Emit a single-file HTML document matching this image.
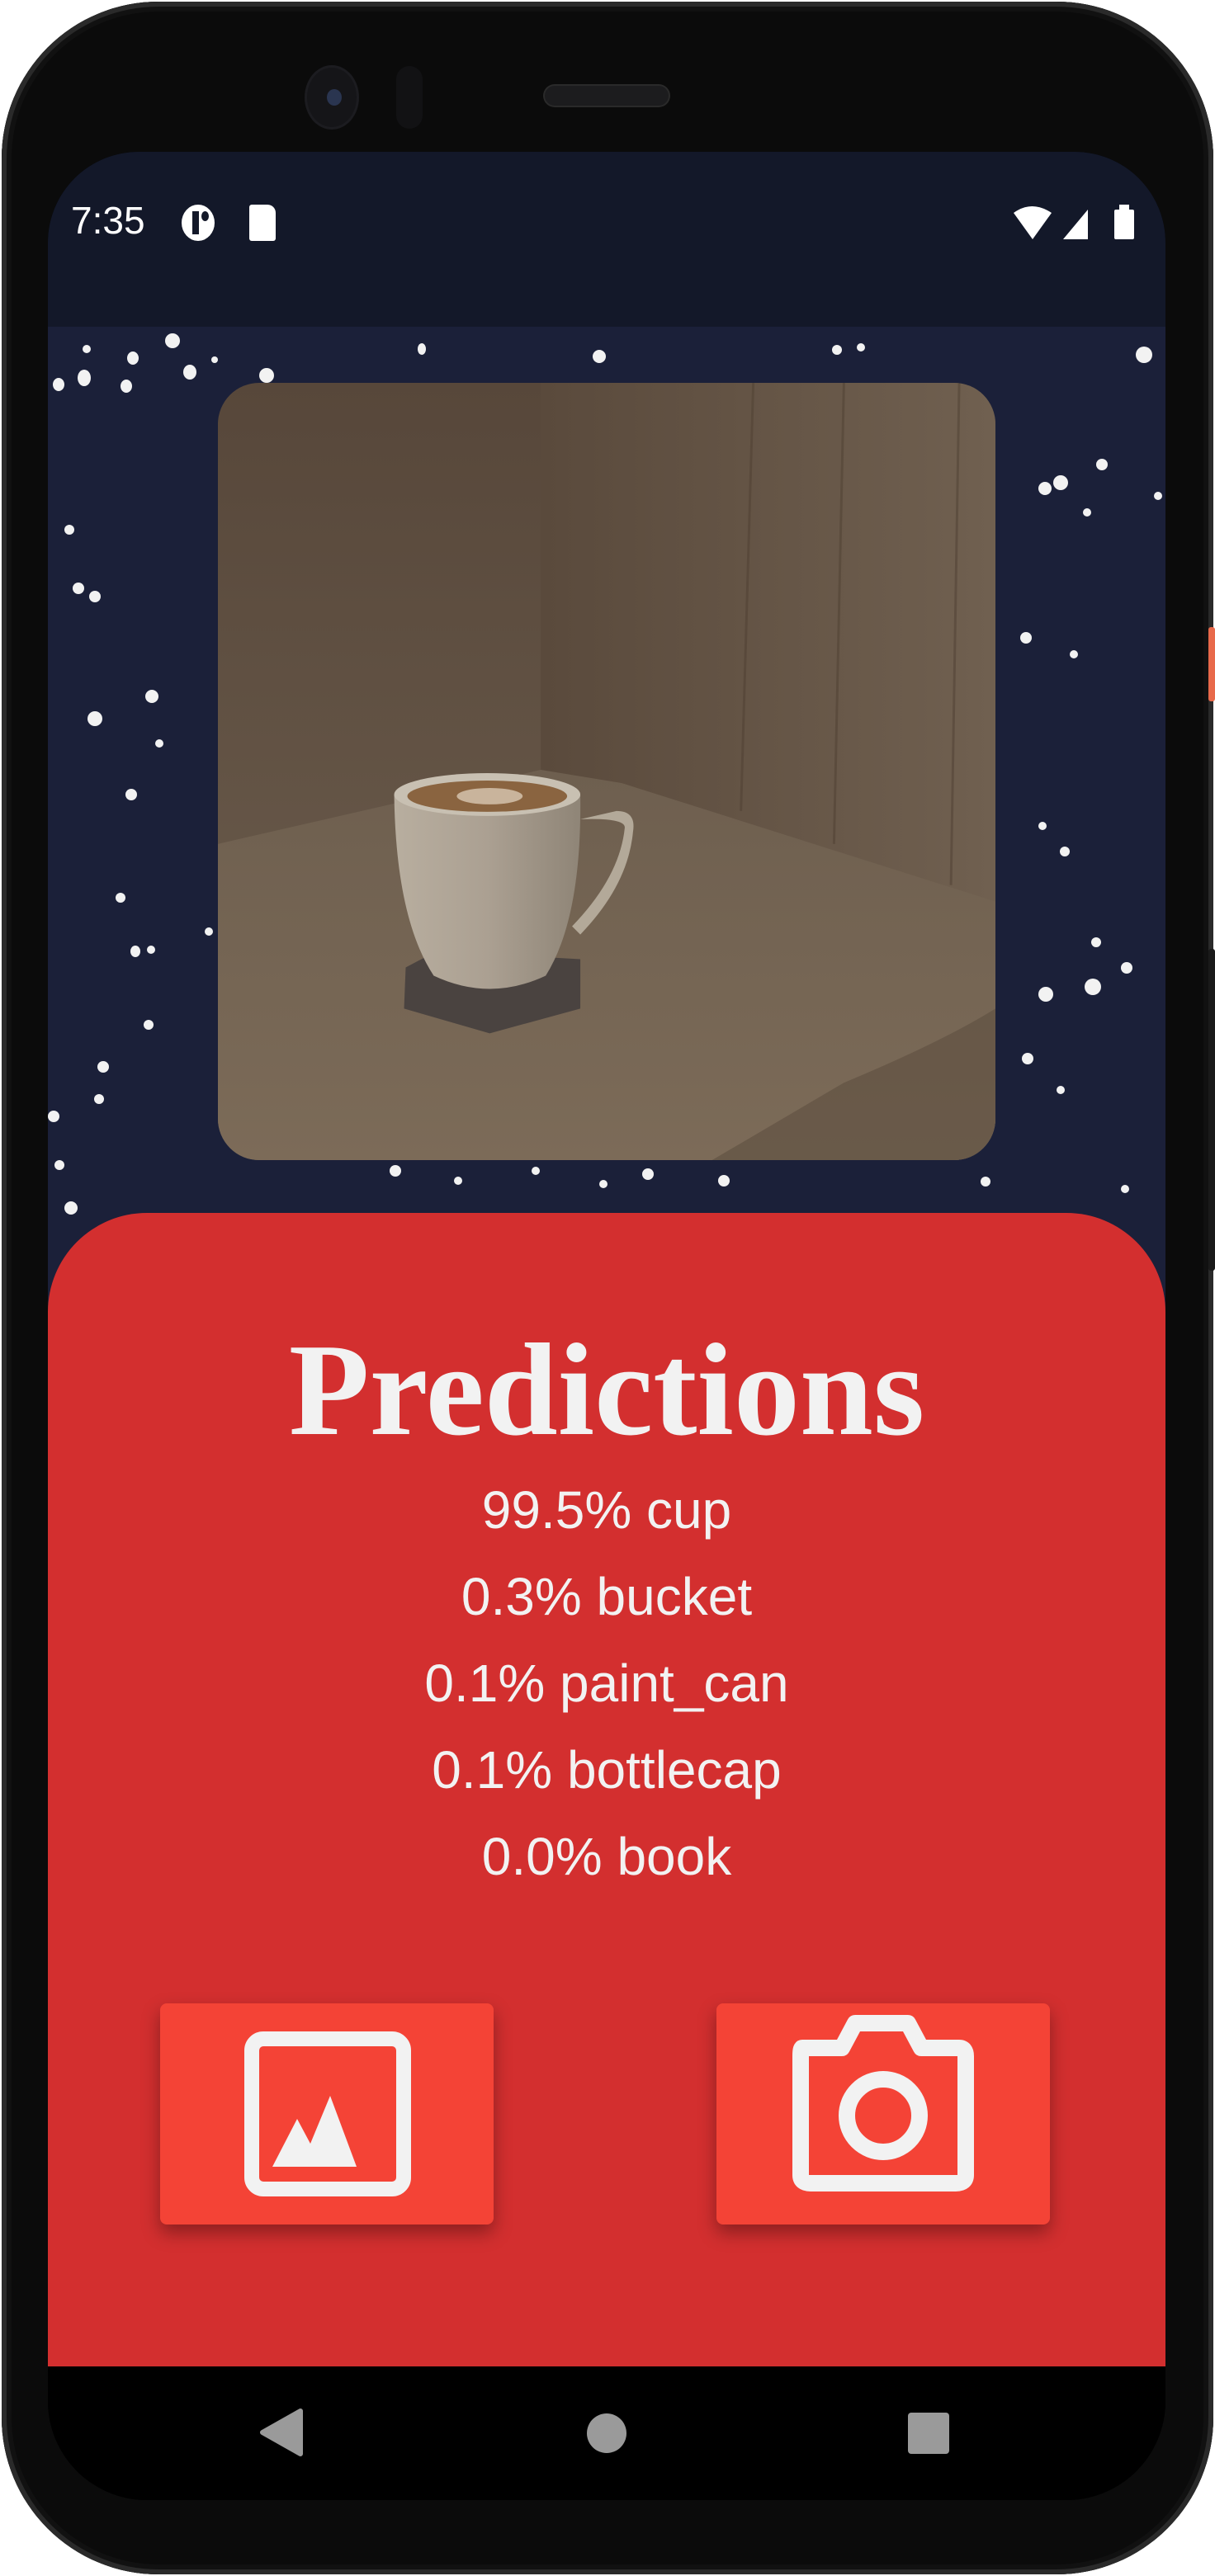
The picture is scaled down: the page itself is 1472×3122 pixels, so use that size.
<!DOCTYPE html>
<html><head><meta charset="utf-8"><style>
html,body{margin:0;padding:0;background:#fff;}
body{width:1472px;height:3122px;position:relative;overflow:hidden;font-family:"Liberation Sans",sans-serif;}
.phone{position:absolute;left:2px;top:2px;width:1468px;height:3118px;border-radius:190px;background:#0b0b0b;box-shadow:inset 0 0 0 6px #2a2a2a, inset 0 0 0 12px #111;}
.screen{position:absolute;left:58px;top:184px;width:1354px;height:2846px;border-radius:110px 110px 120px 120px;overflow:hidden;background:#000;}
.status{position:absolute;left:0;top:0;width:100%;height:212px;background:#131829;}
.app{position:absolute;left:0;top:212px;width:100%;height:2472px;background:#1b2039;overflow:hidden;}
.star{position:absolute;background:#f2f2f2;border-radius:50%;}
.img{position:absolute;left:206px;top:68px;width:942px;height:942px;border-radius:50px;overflow:hidden;}
.panel{position:absolute;left:0;top:1074px;width:100%;height:1404px;background:#d32f2f;border-radius:120px 120px 0 0;}
h1{position:absolute;left:0;width:100%;top:124px;margin:0;text-align:center;font-family:"Liberation Serif",serif;font-weight:bold;font-size:160px;line-height:180px;color:#f2f2f2;}
.p{position:absolute;left:0;width:100%;text-align:center;font-size:64px;line-height:70px;color:#f2f2f2;}
.btn{position:absolute;top:958px;width:404px;height:268px;background:#f44336;border-radius:8px;box-shadow:0 10px 22px rgba(0,0,0,.35);}
.nav{position:absolute;left:0;top:2684px;width:100%;height:162px;background:#000;}
</style></head><body>
<div class="phone"></div>
<div style="position:absolute;left:372px;top:82px;width:60px;height:72px;border-radius:50%;background:#151518;box-shadow:0 0 0 3px #1c1c20"></div>
<div style="position:absolute;left:396px;top:108px;width:18px;height:20px;border-radius:50%;background:#2a3550"></div>
<div style="position:absolute;left:480px;top:80px;width:32px;height:76px;border-radius:16px;background:#121214"></div>
<div style="position:absolute;left:660px;top:104px;width:150px;height:24px;border-radius:12px;background:#1c1c1e;box-shadow:0 0 0 2px #2a2a2a"></div>
<div style="position:absolute;left:1464px;top:760px;width:8px;height:90px;background:#e8694a;border-radius:3px"></div>
<div style="position:absolute;left:1464px;top:1150px;width:8px;height:390px;background:#1a1a1a;border-radius:3px"></div>
<div class="screen">
 <div class="status">
  <div style="position:absolute;left:28px;top:56px;font-size:46px;color:#fff;">7:35</div>
  <div style="position:absolute;left:162px;top:64px;width:40px;height:44px;border-radius:50%;background:#fff"></div>
  <div style="position:absolute;left:175px;top:72px;width:8px;height:28px;background:#131829"></div>
  <div style="position:absolute;left:186px;top:72px;width:9px;height:12px;border-radius:50%;background:#131829"></div>
  <div style="position:absolute;left:244px;top:64px;width:32px;height:44px;background:#fff;border-radius:3px 10px 3px 3px"></div>
  <svg style="position:absolute;left:1170px;top:60px" width="150" height="52" viewBox="0 0 150 52">
   <path d="M0 14 Q22 -2 46 14 L23 46 Z" fill="#fff"/>
   <path d="M60 46 L90 10 L90 46 Z" fill="#fff"/>
   <rect x="122" y="10" width="24" height="36" rx="2" fill="#fff"/><rect x="128" y="4" width="12" height="8" fill="#fff"/>
  </svg>
 </div>
 <div class="app">
  <div class="star" style="left:142px;top:8px;width:18px;height:18px"></div>
  <div class="star" style="left:42px;top:22px;width:10px;height:10px"></div>
  <div class="star" style="left:96px;top:30px;width:14px;height:16px"></div>
  <div class="star" style="left:6px;top:62px;width:14px;height:16px"></div>
  <div class="star" style="left:36px;top:52px;width:16px;height:20px"></div>
  <div class="star" style="left:88px;top:64px;width:14px;height:16px"></div>
  <div class="star" style="left:164px;top:46px;width:16px;height:18px"></div>
  <div class="star" style="left:198px;top:36px;width:8px;height:8px"></div>
  <div class="star" style="left:256px;top:50px;width:18px;height:18px"></div>
  <div class="star" style="left:448px;top:20px;width:10px;height:14px"></div>
  <div class="star" style="left:660px;top:28px;width:16px;height:16px"></div>
  <div class="star" style="left:950px;top:22px;width:12px;height:12px"></div>
  <div class="star" style="left:980px;top:20px;width:10px;height:10px"></div>
  <div class="star" style="left:1318px;top:24px;width:20px;height:20px"></div>
  <div class="star" style="left:1270px;top:160px;width:14px;height:14px"></div>
  <div class="star" style="left:1200px;top:188px;width:16px;height:16px"></div>
  <div class="star" style="left:1218px;top:180px;width:18px;height:18px"></div>
  <div class="star" style="left:1254px;top:220px;width:10px;height:10px"></div>
  <div class="star" style="left:1340px;top:200px;width:10px;height:10px"></div>
  <div class="star" style="left:1178px;top:370px;width:14px;height:14px"></div>
  <div class="star" style="left:1238px;top:392px;width:10px;height:10px"></div>
  <div class="star" style="left:1200px;top:600px;width:10px;height:10px"></div>
  <div class="star" style="left:1200px;top:800px;width:18px;height:18px"></div>
  <div class="star" style="left:1256px;top:790px;width:20px;height:20px"></div>
  <div class="star" style="left:1264px;top:740px;width:12px;height:12px"></div>
  <div class="star" style="left:1300px;top:770px;width:14px;height:14px"></div>
  <div class="star" style="left:1226px;top:630px;width:12px;height:12px"></div>
  <div class="star" style="left:1180px;top:880px;width:14px;height:14px"></div>
  <div class="star" style="left:1222px;top:920px;width:10px;height:10px"></div>
  <div class="star" style="left:20px;top:240px;width:12px;height:12px"></div>
  <div class="star" style="left:30px;top:310px;width:14px;height:14px"></div>
  <div class="star" style="left:50px;top:320px;width:14px;height:14px"></div>
  <div class="star" style="left:48px;top:466px;width:18px;height:18px"></div>
  <div class="star" style="left:118px;top:440px;width:16px;height:16px"></div>
  <div class="star" style="left:130px;top:500px;width:10px;height:10px"></div>
  <div class="star" style="left:94px;top:560px;width:14px;height:14px"></div>
  <div class="star" style="left:82px;top:686px;width:12px;height:12px"></div>
  <div class="star" style="left:100px;top:750px;width:12px;height:14px"></div>
  <div class="star" style="left:120px;top:750px;width:10px;height:10px"></div>
  <div class="star" style="left:190px;top:728px;width:10px;height:10px"></div>
  <div class="star" style="left:116px;top:840px;width:12px;height:12px"></div>
  <div class="star" style="left:60px;top:890px;width:14px;height:14px"></div>
  <div class="star" style="left:56px;top:930px;width:12px;height:12px"></div>
  <div class="star" style="left:0px;top:950px;width:14px;height:14px"></div>
  <div class="star" style="left:8px;top:1010px;width:12px;height:12px"></div>
  <div class="star" style="left:20px;top:1060px;width:16px;height:16px"></div>
  <div class="star" style="left:414px;top:1016px;width:14px;height:14px"></div>
  <div class="star" style="left:492px;top:1030px;width:10px;height:10px"></div>
  <div class="star" style="left:586px;top:1018px;width:10px;height:10px"></div>
  <div class="star" style="left:668px;top:1034px;width:10px;height:10px"></div>
  <div class="star" style="left:720px;top:1020px;width:14px;height:14px"></div>
  <div class="star" style="left:812px;top:1028px;width:14px;height:14px"></div>
  <div class="star" style="left:1130px;top:1030px;width:12px;height:12px"></div>
  <div class="star" style="left:1300px;top:1040px;width:10px;height:10px"></div>
  <div class="img">
   <svg width="942" height="942" viewBox="0 0 944 944">
    <defs>
     <linearGradient id="lw" x1="0" y1="0" x2="0" y2="1"><stop offset="0" stop-color="#57473a"/><stop offset="1" stop-color="#6e5f4f"/></linearGradient>
     <linearGradient id="rw" x1="0" y1="0" x2="1" y2="0"><stop offset="0" stop-color="#5a4a3c"/><stop offset="1" stop-color="#706050"/></linearGradient>
     <linearGradient id="tb" x1="0" y1="0" x2="0" y2="1"><stop offset="0" stop-color="#6e5f4f"/><stop offset="1" stop-color="#7c6b58"/></linearGradient>
     <linearGradient id="cup" x1="0" y1="0" x2="1" y2="0"><stop offset="0" stop-color="#b8ae9f"/><stop offset=".5" stop-color="#aba092"/><stop offset="1" stop-color="#8f8577"/></linearGradient>
    </defs>
    <rect width="944" height="944" fill="url(#lw)"/>
    <rect x="392" y="0" width="552" height="944" fill="url(#rw)"/>
    <g stroke="#4f4033" stroke-width="3" opacity=".5"><line x1="650" y1="0" x2="635" y2="520"/><line x1="760" y1="0" x2="748" y2="560"/><line x1="900" y1="0" x2="890" y2="610"/></g>
    <path d="M0 560 L392 470 L490 486 L944 630 L944 944 L0 944 Z" fill="url(#tb)"/>
    <path d="M944 760 Q880 800 760 850 L600 944 L944 944 Z" fill="#5e4e3f" opacity=".6"/>
    <path d="M228 710 L266 690 L440 700 L440 760 L330 790 L226 760 Z" fill="#4a4340"/>
    <path d="M484 520 Q508 520 504 545 Q498 610 440 670 L430 660 Q488 600 494 540 Q494 528 440 530 Z" fill="#b3a999"/>
    <path d="M214 500 Q216 650 262 720 Q330 752 398 720 Q442 650 440 500 Z" fill="url(#cup)"/>
    <ellipse cx="327" cy="500" rx="113" ry="26" fill="#c8c0b2"/>
    <ellipse cx="327" cy="502" rx="97" ry="19" fill="#8a6440"/>
    <ellipse cx="330" cy="502" rx="40" ry="10" fill="#c9b49c"/>
   </svg>
  </div>
  <div class="panel">
   <h1>Predictions</h1>
   <div class="p" style="top:325px">99.5% cup</div>
   <div class="p" style="top:430px">0.3% bucket</div>
   <div class="p" style="top:535px">0.1% paint_can</div>
   <div class="p" style="top:640px">0.1% bottlecap</div>
   <div class="p" style="top:745px">0.0% book</div>
   <div class="btn" style="left:136px">
    <svg width="404" height="268" viewBox="0 0 404 268">
     <rect x="111" y="43" width="184" height="182" rx="14" fill="none" stroke="#f2f2f2" stroke-width="18"/>
     <path d="M136 198 L166 140 L182 170 L206 112 L238 198 Z" fill="#f2f2f2"/>
    </svg>
   </div>
   <div class="btn" style="left:810px">
    <svg width="404" height="268" viewBox="0 0 404 268">
     <path d="M104 54 L152 54 L168 24 L232 24 L248 54 L294 54 Q302 54 302 64 L302 208 Q302 218 290 218 L114 218 Q102 218 102 208 L102 64 Q102 54 104 54 Z" fill="none" stroke="#f2f2f2" stroke-width="20" stroke-linejoin="round"/>
     <circle cx="202" cy="136" r="44" fill="none" stroke="#f2f2f2" stroke-width="20"/>
    </svg>
   </div>
  </div>
 </div>
 <div class="nav">
  <svg width="1354" height="162" viewBox="0 0 1354 162">
   <path d="M306 54 L306 106 L260 80 Z" fill="#9a9a9a" stroke="#9a9a9a" stroke-width="6" stroke-linejoin="round"/>
   <circle cx="677" cy="81" r="24" fill="#9a9a9a"/>
   <rect x="1042" y="56" width="50" height="50" rx="4" fill="#9a9a9a"/>
  </svg>
 </div>
</div>
</body></html>
